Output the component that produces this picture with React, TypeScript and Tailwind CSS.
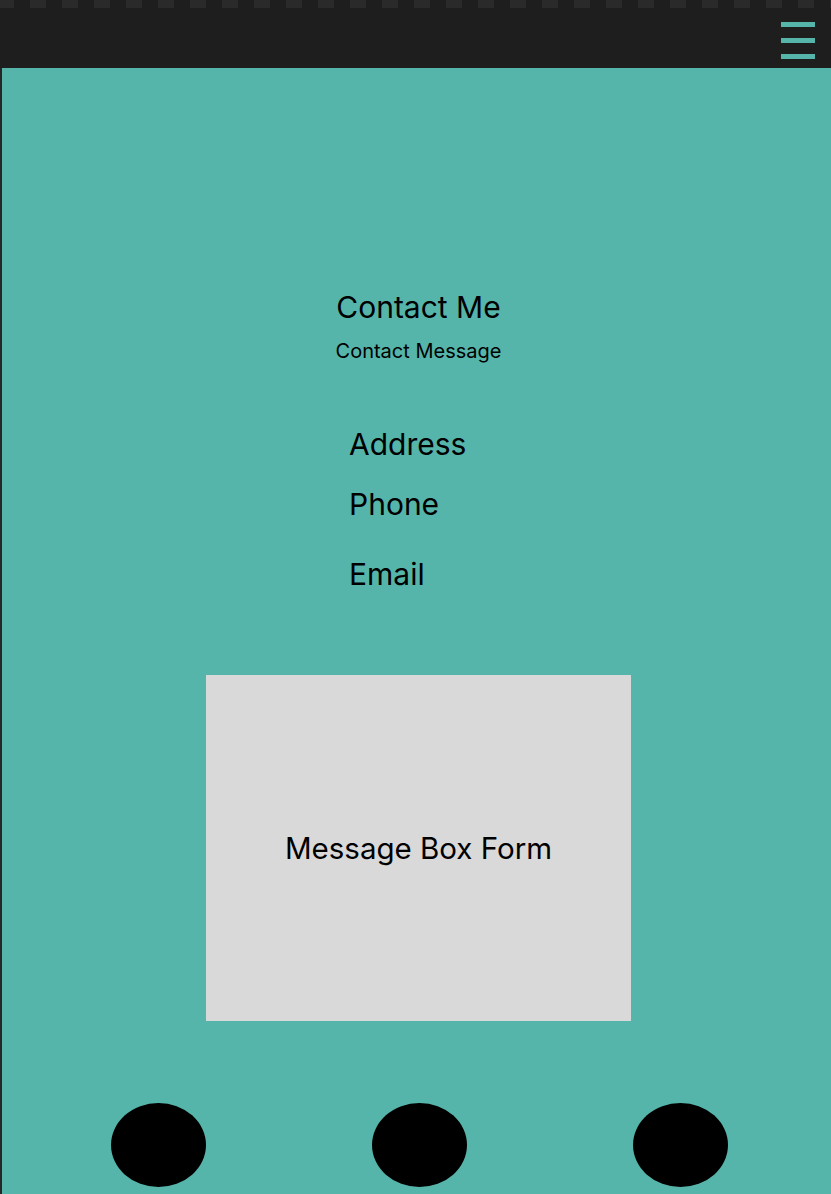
import React from "react";

export default function App() {
  const squares = Array.from({ length: 27 });
  return (
    <div className="w-[831px] h-[1194px] overflow-hidden bg-[#1e1e1e] flex flex-col" style={{ fontFamily: "Inter, 'Noto Sans', sans-serif" }}>
      <div className="h-[8px] flex shrink-0 -ml-[2px]">
        {squares.map((_, i) => (
          <div key={i} className="flex shrink-0">
            <div className="w-[16px] h-[8px] bg-[#2a2a2a]" />
            <div className="w-[16px] h-[8px] bg-[#1e1e1e]" />
          </div>
        ))}
      </div>
      <div className="h-[60px] shrink-0 flex justify-end items-start pr-[16px] pt-[14px]">
        <div className="flex flex-col gap-[11px]">
          <div className="w-[34px] h-[5px] bg-[#55b5aa]" />
          <div className="w-[34px] h-[5px] bg-[#55b5aa]" />
          <div className="w-[34px] h-[5px] bg-[#55b5aa]" />
        </div>
      </div>
      <div className="flex-1 flex">
        <div className="w-[2px] bg-[#262626]" />
        <div className="flex-1 bg-[#55b5aa] flex flex-col items-center text-black pl-[4px]">
          <div className="mt-[224px] text-[30px] leading-[30px]">Contact Me</div>
          <div className="mt-[19px] text-[20px] leading-[20px]">Contact Message</div>
          <div className="mt-[68px] flex flex-col text-[30px] leading-[30px] self-start pl-[343px]">
            <div>Address</div>
            <div className="mt-[30px]">Phone</div>
            <div className="mt-[40px]">Email</div>
          </div>
          <div className="mt-[86px] w-[425px] h-[346px] bg-[#d9d9d9] flex items-center justify-center text-[29.5px] leading-[30px]">
            Message Box Form
          </div>
          <div className="mt-[82px] w-full flex justify-between pl-[105px] pr-[103px]">
            <div className="w-[95px] h-[84px] rounded-[50%] bg-black" />
            <div className="w-[95px] h-[84px] rounded-[50%] bg-black" />
            <div className="w-[95px] h-[84px] rounded-[50%] bg-black" />
          </div>
        </div>
      </div>
    </div>
  );
}
